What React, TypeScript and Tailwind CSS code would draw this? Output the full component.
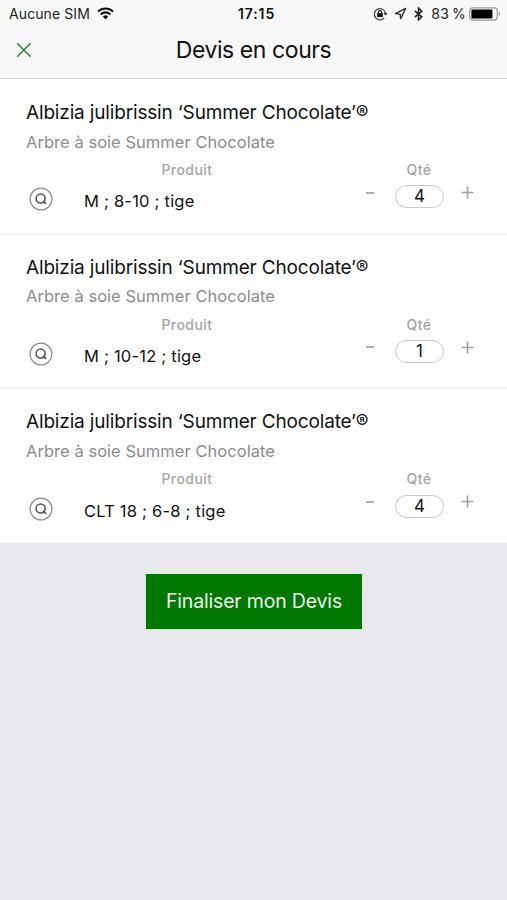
import React from "react";

type Line = { product: string; qty: number };

const lines: Line[] = [
  { product: "M ; 8-10 ; tige", qty: 4 },
  { product: "M ; 10-12 ; tige", qty: 1 },
  { product: "CLT 18 ; 6-8 ; tige", qty: 4 },
];

function WifiIcon() {
  return (
    <svg className="ml-[7px] h-[13px] w-[17px]" viewBox="0 0 17 13" fill="none" stroke="#111" strokeWidth="2.1">
      <path d="M1 4.6a10.7 10.7 0 0 1 15 0" />
      <path d="M3.6 7.4a7 7 0 0 1 9.8 0" />
      <path d="M8.5 12.4 5.8 9.6a3.8 3.8 0 0 1 5.4 0Z" fill="#111" stroke="none" />
    </svg>
  );
}

function StatusBar() {
  return (
    <div className="grid h-[27px] grid-cols-[1fr_auto_1fr] items-center pr-[6px] pl-[9px] text-[14px] text-[#222]">
      <div className="flex items-center">
        <span className="tracking-[0.1px] whitespace-nowrap">Aucune SIM</span>
        <WifiIcon />
      </div>
      <span className="ml-[3px] text-[14px] font-semibold tracking-[0.9px] text-[#111]">17:15</span>
      <div className="flex items-center justify-end">
        <svg className="h-[14px] w-[15px]" viewBox="0 0 15 14" fill="none" stroke="#444" strokeWidth="1.3">
          <path d="M11.2 10.9A5.6 5.6 0 1 1 12.4 6" />
          <path d="m10.4 6 2.1 2.8L14.6 6Z" fill="#333" stroke="none" />
          <rect x="4.2" y="6.1" width="5.6" height="4" fill="#111" stroke="none" />
          <path d="M5.4 6.6V5.2a1.6 1.6 0 0 1 3.2 0v1.4" strokeWidth="1.2" stroke="#222" />
        </svg>
        <svg className="ml-[6px] h-[13px] w-[13px]" viewBox="0 0 13 13" fill="none" stroke="#333" strokeWidth="1.4" strokeLinejoin="round">
          <path d="M11.6 1.4 1.4 6.6l4.7.5.6 4.5Z" />
        </svg>
        <svg className="ml-[7px] h-[14px] w-[9px]" viewBox="0 0 9 14" fill="none" stroke="#222" strokeWidth="1.5">
          <path d="m.8 3.9 7 6L4.5 13V1l3.3 3.1-7 6" />
        </svg>
        <span className="ml-[8px] tracking-[0.3px] whitespace-nowrap [word-spacing:-1.5px]">83 %</span>
        <svg className="ml-[3px] h-[14px] w-[32px]" viewBox="0 0 32 14" fill="none">
          <rect x=".7" y=".9" width="27.6" height="12.2" rx="3" stroke="#999" strokeWidth="1.2" />
          <rect x="2.4" y="2.6" width="21" height="8.8" rx="1" fill="#000" />
          <path d="M29.8 4.8c1.6.6 1.6 3.8 0 4.4Z" fill="#999" />
        </svg>
      </div>
    </div>
  );
}

function QuoteLine({ product, qty }: Line) {
  return (
    <section className="h-[154.67px] bg-white pt-[21px] pl-[26px]">
      <h2 className="h-[26px] text-[19px] leading-[26px] tracking-[-0.16px] whitespace-nowrap text-[#111]">
        Albizia julibrissin ‘Summer Chocolate’®
      </h2>
      <p className="mt-[4.6px] h-[22px] text-[16.5px] leading-[22px] tracking-[0.04px] whitespace-nowrap text-[#8c8c8c]">
        Arbre à soie Summer Chocolate
      </p>
      <div className="mt-[7.4px] grid grid-cols-[322px_142px] text-[14px] leading-[20px] font-medium tracking-[0.45px] text-[#a5a5a5]">
        <span className="text-center">Produit</span>
        <span className="text-center">Qté</span>
      </div>
      <div className="flex h-[52px] items-start">
        <svg className="mt-[7.3px] ml-[2.6px] h-[24px] w-[24px]" viewBox="0 0 24 24" fill="none" stroke="#555">
          <circle cx="12" cy="12" r="10.9" strokeWidth="1.2" stroke="#8c8c8c" />
          <circle cx="11.6" cy="11.5" r="4.5" strokeWidth="1.6" />
          <path d="m14 14.2 3.2 2.6" strokeWidth="1.7" />
        </svg>
        <span className="mt-[10.3px] ml-[31.4px] w-[271px] text-[16.5px] leading-[22px] tracking-[0.2px] whitespace-nowrap text-[#111]">
          {product}
        </span>
        <button className="mt-[2.6px] flex h-[20px] w-[30px] items-center justify-center" aria-label="Moins">
          <span className="h-[2px] w-[8px] bg-[#b0b0b0]" />
        </button>
        <span className="mt-[5.4px] ml-[10px] flex h-[23px] w-[49px] items-center justify-center rounded-full border border-[#c9c9c9] text-[17px] leading-[21px] text-[#111]">
          {qty}
        </span>
        <button className="mt-[2.5px] ml-[9px] flex h-[20px] w-[30px] items-center justify-center" aria-label="Plus">
          <svg className="h-[13px] w-[13px]" viewBox="0 0 13 13" stroke="#a0a0a0" strokeWidth="1.6">
            <path d="M6.5.5v12M.5 6.5h12" />
          </svg>
        </button>
      </div>
    </section>
  );
}

export default function App() {
  return (
    <main className="flex h-[900px] w-[507px] flex-col overflow-hidden bg-[#e9e8ed] font-['Inter',sans-serif]">
      <header className="h-[79px] border-b border-[#d9d9da] bg-[#f8f8f8]">
        <StatusBar />
        <div className="grid h-[46px] grid-cols-[1fr_auto_1fr] items-center">
          <svg className="ml-[16px] h-[16px] w-[16px]" viewBox="0 0 16 16" stroke="#16871b" strokeWidth="1.3">
            <path d="m1.2 1.3 13.4 13.4M14.6 1.3 1.2 14.7" />
          </svg>
          <h1 className="text-[23px] leading-[30px] tracking-[-0.42px] text-[#111]">Devis en cours</h1>
        </div>
      </header>
      <div className="flex flex-col">
        {lines.map((line, i) => (
          <React.Fragment key={line.product}>
            {i > 0 && <hr className="z-10 -my-px h-[2px] border-0 bg-[#f1f1f2]" />}
            <QuoteLine {...line} />
          </React.Fragment>
        ))}
      </div>
      <button className="mt-[31px] ml-[146px] h-[55px] w-[216px] bg-[#007800] text-[19.5px] tracking-[-0.18px] whitespace-nowrap text-[#f0f8ef]">
        Finaliser mon Devis
      </button>
    </main>
  );
}
